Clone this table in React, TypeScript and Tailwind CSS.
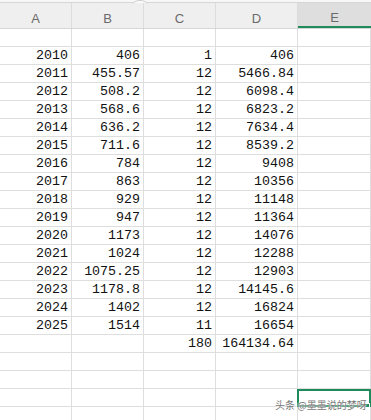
const COLS = [
  { key: 'A', w: 'w-[72px]' },
  { key: 'B', w: 'w-[72px]' },
  { key: 'C', w: 'w-[72px]' },
  { key: 'D', w: 'w-[82px]' },
  { key: 'E', w: 'w-[73px]' },
];

const ROWS: string[][] = [
  ['', '', '', '', ''],
  ['2010', '406', '1', '406', ''],
  ['2011', '455.57', '12', '5466.84', ''],
  ['2012', '508.2', '12', '6098.4', ''],
  ['2013', '568.6', '12', '6823.2', ''],
  ['2014', '636.2', '12', '7634.4', ''],
  ['2015', '711.6', '12', '8539.2', ''],
  ['2016', '784', '12', '9408', ''],
  ['2017', '863', '12', '10356', ''],
  ['2018', '929', '12', '11148', ''],
  ['2019', '947', '12', '11364', ''],
  ['2020', '1173', '12', '14076', ''],
  ['2021', '1024', '12', '12288', ''],
  ['2022', '1075.25', '12', '12903', ''],
  ['2023', '1178.8', '12', '14145.6', ''],
  ['2024', '1402', '12', '16824', ''],
  ['2025', '1514', '11', '16654', ''],
  ['', '', '180', '164134.64', ''],
  ['', '', '', '', ''],
  ['', '', '', '', ''],
  ['', '', '', '', ''],
  ['', '', '', '', ''],
];

export default function App() {
  return (
    <div className="relative w-[371px] h-[420px] overflow-hidden bg-white">
      {/* top strip */}
      <div className="h-[2px] bg-[#f7f7f7]" />

      {/* column headers */}
      <div className="flex h-[27px] border-t border-b border-[#d6d6d6] bg-[#efefef]">
        {COLS.map((c) => (
          <div
            key={c.key}
            className={`${c.w} shrink-0 flex items-center justify-center pt-[6px] border-r border-[#dcdcdc] text-[13px] text-[#6a6a6a] font-['Liberation_Sans',sans-serif] ${
              c.key === 'E' ? 'bg-[#dedede] border-b-2 border-b-[#1f8a5a] border-r-0' : ''
            }`}
          >
            {c.key}
          </div>
        ))}
      </div>

      {/* little scroll marker */}
      <svg className="absolute left-[132px] top-0" width="16" height="4" viewBox="0 0 16 4">
        <path d="M0 3 L6 0.5 L10 0.5 L16 3" fill="#fafafa" stroke="#d0d0d0" strokeWidth="1" />
      </svg>

      {/* cells */}
      <div className="flex flex-col">
        {ROWS.map((row, i) => (
          <div key={i} className="flex h-[18px] shrink-0">
            {row.map((v, j) => (
              <div
                key={j}
                className={`${COLS[j].w} shrink-0 h-full border-r border-b border-[#dedede] flex items-center justify-end pr-[3px] pt-[1px] text-[13.3px] leading-none text-[#111] font-['Liberation_Mono',monospace]`}
              >
                {v}
              </div>
            ))}
          </div>
        ))}
      </div>

      {/* selected cell E */}
      <div className="absolute left-[297px] top-[389px] w-[74px] h-[18px] border-2 border-[#1f8a5a]" />
      <div className="absolute left-[364px] top-[403px] w-[6px] h-[5px] bg-[#1f8a5a] border border-white" />

      {/* watermark */}
      <div className="absolute left-[275px] top-[400px] whitespace-nowrap text-[10px] leading-none text-[#777] font-['Noto_Sans_CJK_SC',sans-serif] [text-shadow:0_0_2px_#fff,0_0_2px_#fff]">
        头条 @墨墨说的梦呀
      </div>
    </div>
  );
}
